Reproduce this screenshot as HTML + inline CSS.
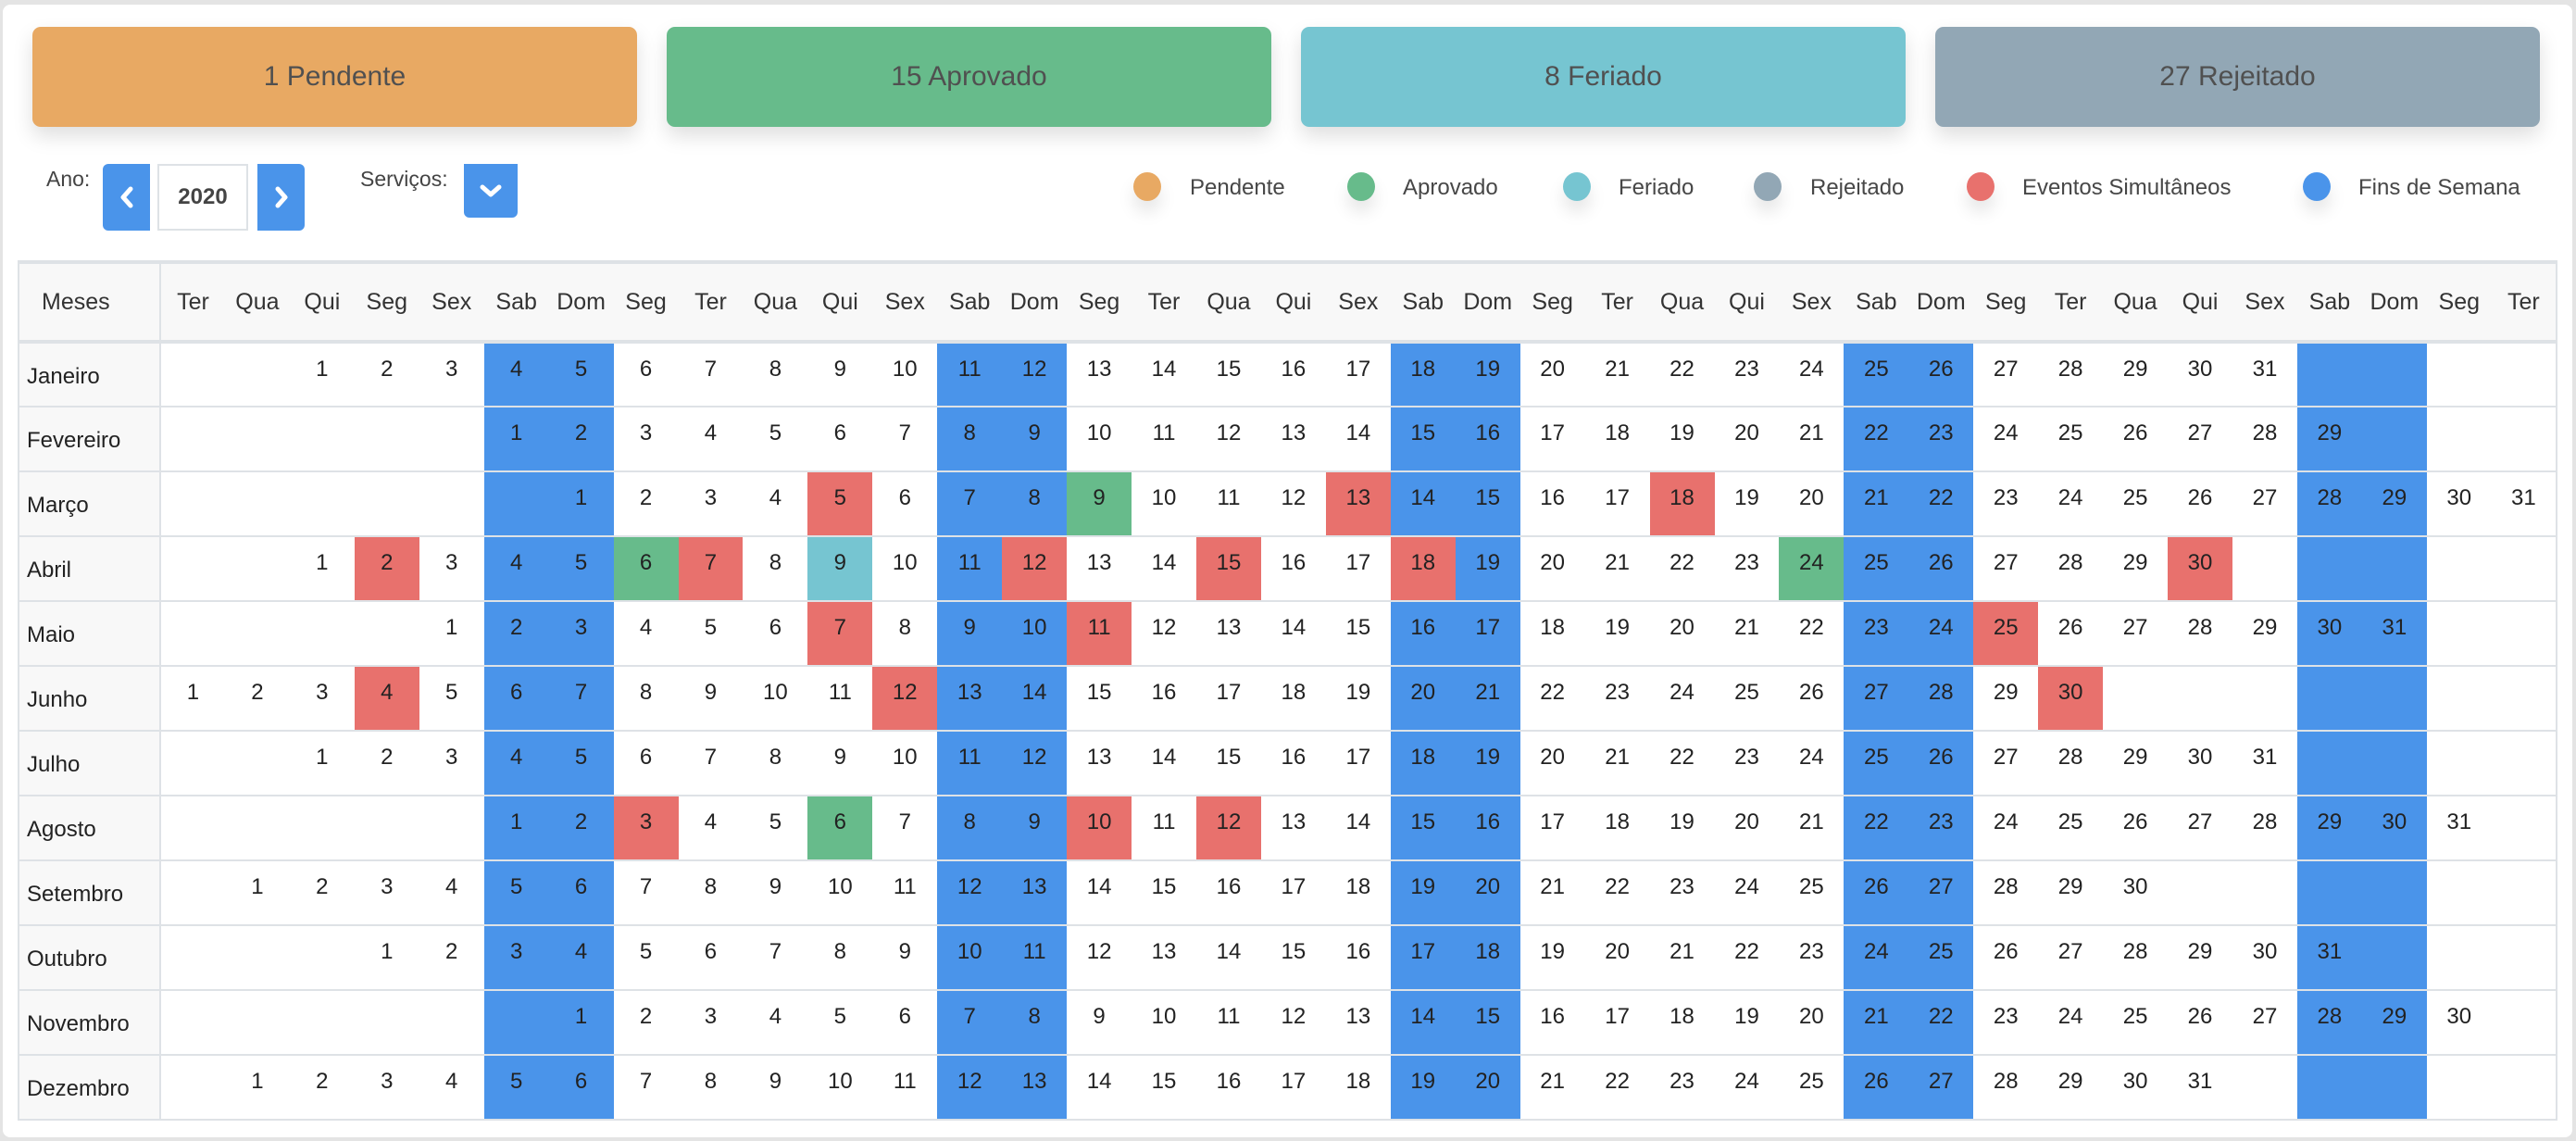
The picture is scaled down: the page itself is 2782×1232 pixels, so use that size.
<!DOCTYPE html>
<html><head><meta charset="utf-8"><style>
*{box-sizing:border-box;margin:0;padding:0}
body{width:2782px;height:1232px;background:#e4e4e4;font-family:"Liberation Sans",sans-serif;position:relative;overflow:hidden}
.card{position:absolute;left:3px;top:5px;width:2775px;height:1223px;background:#fff;border-radius:8px}
.b{position:absolute;top:29px;width:653px;height:108px;border-radius:9px;color:#505050;font-size:30px;display:flex;align-items:center;justify-content:center;box-shadow:0 10px 22px rgba(0,0,0,.13)}
.lbl{position:absolute;font-size:23px;color:#444}
.blue{background:#4a94ea}
.btn{position:absolute;top:177px;height:72px;width:51px;display:flex;align-items:center;justify-content:center}
.dot{position:absolute;top:186px;width:30px;height:31px;border-radius:50%;box-shadow:0 12px 18px rgba(0,0,0,.1)}
.lt{position:absolute;top:189px;font-size:24px;color:#474747}
table{position:absolute;left:19px;top:281px;width:2743px;border-collapse:collapse;table-layout:fixed;border-top:4px solid #dee2e6;border-left:2px solid #dee2e6;border-right:2px solid #dee2e6;border-bottom:2px solid #dee2e6}
th{height:86px;background:#f8f8f8;font-weight:normal;font-size:25px;color:#333;border-bottom:4px solid #dee2e6;text-align:center}
td{height:70px;border-top:2px solid #dee2e6;font-size:24px;color:#222;text-align:center;vertical-align:top;padding-top:14px}
th:first-child{text-align:left;padding-left:24px;border-right:2px solid #dee2e6;width:153px}
td:first-child{text-align:left;padding-left:8px;padding-top:22px;background:#f8f8f8;border-right:2px solid #dee2e6;color:#222}
tbody td:nth-child(7),tbody td:nth-child(8),tbody td:nth-child(14),tbody td:nth-child(15),tbody td:nth-child(21),tbody td:nth-child(22),tbody td:nth-child(28),tbody td:nth-child(29),tbody td:nth-child(35),tbody td:nth-child(36){background:#4a94ea}
tbody td.r{background:#e8716d}tbody td.g{background:#67bb8b}tbody td.t{background:#76c5d1}
</style></head><body>
<div class="card"></div>
<div class="b" style="left:35px;background:#e8a963">1 Pendente</div>
<div class="b" style="left:720px;background:#67bb8b">15 Aprovado</div>
<div class="b" style="left:1405px;background:#76c5d1">8 Feriado</div>
<div class="b" style="left:2090px;background:#92a7b5">27 Rejeitado</div>

<div class="lbl" style="left:50px;top:180px">Ano:</div>
<div class="btn blue" style="left:111px;border-radius:6px 0 0 6px"><svg width="20" height="26" viewBox="0 0 20 26"><path d="M14 4 L6 13 L14 22" stroke="#fff" stroke-width="5" fill="none" stroke-linecap="round" stroke-linejoin="round"/></svg></div>
<div style="position:absolute;left:170px;top:177px;width:98px;height:72px;border:2px solid #dee2e6;display:flex;align-items:center;justify-content:center;font-weight:bold;font-size:24px;color:#444">2020</div>
<div class="btn blue" style="left:278px;border-radius:0 6px 6px 0"><svg width="20" height="26" viewBox="0 0 20 26"><path d="M6 4 L14 13 L6 22" stroke="#fff" stroke-width="5" fill="none" stroke-linecap="round" stroke-linejoin="round"/></svg></div>
<div class="lbl" style="left:389px;top:180px">Serviços:</div>
<div class="btn blue" style="left:501px;width:58px;height:58px;border-radius:0 0 6px 6px"><svg width="26" height="20" viewBox="0 0 26 20"><path d="M4 6 L13 14 L22 6" stroke="#fff" stroke-width="5" fill="none" stroke-linecap="round" stroke-linejoin="round"/></svg></div>

<div class="dot" style="left:1224px;background:#e8a963"></div><div class="lt" style="left:1285px">Pendente</div>
<div class="dot" style="left:1455px;background:#67bb8b"></div><div class="lt" style="left:1515px">Aprovado</div>
<div class="dot" style="left:1688px;background:#76c5d1"></div><div class="lt" style="left:1748px">Feriado</div>
<div class="dot" style="left:1894px;background:#92a7b5"></div><div class="lt" style="left:1955px">Rejeitado</div>
<div class="dot" style="left:2124px;background:#e8716d"></div><div class="lt" style="left:2184px">Eventos Simultâneos</div>
<div class="dot" style="left:2487px;background:#4a94ea"></div><div class="lt" style="left:2547px">Fins de Semana</div>

<table>
<thead><tr><th>Meses</th><th>Ter</th><th>Qua</th><th>Qui</th><th>Seg</th><th>Sex</th><th>Sab</th><th>Dom</th><th>Seg</th><th>Ter</th><th>Qua</th><th>Qui</th><th>Sex</th><th>Sab</th><th>Dom</th><th>Seg</th><th>Ter</th><th>Qua</th><th>Qui</th><th>Sex</th><th>Sab</th><th>Dom</th><th>Seg</th><th>Ter</th><th>Qua</th><th>Qui</th><th>Sex</th><th>Sab</th><th>Dom</th><th>Seg</th><th>Ter</th><th>Qua</th><th>Qui</th><th>Sex</th><th>Sab</th><th>Dom</th><th>Seg</th><th>Ter</th></tr></thead>
<tbody>
<tr><td>Janeiro</td><td></td><td></td><td>1</td><td>2</td><td>3</td><td>4</td><td>5</td><td>6</td><td>7</td><td>8</td><td>9</td><td>10</td><td>11</td><td>12</td><td>13</td><td>14</td><td>15</td><td>16</td><td>17</td><td>18</td><td>19</td><td>20</td><td>21</td><td>22</td><td>23</td><td>24</td><td>25</td><td>26</td><td>27</td><td>28</td><td>29</td><td>30</td><td>31</td><td></td><td></td><td></td><td></td></tr>
<tr><td>Fevereiro</td><td></td><td></td><td></td><td></td><td></td><td>1</td><td>2</td><td>3</td><td>4</td><td>5</td><td>6</td><td>7</td><td>8</td><td>9</td><td>10</td><td>11</td><td>12</td><td>13</td><td>14</td><td>15</td><td>16</td><td>17</td><td>18</td><td>19</td><td>20</td><td>21</td><td>22</td><td>23</td><td>24</td><td>25</td><td>26</td><td>27</td><td>28</td><td>29</td><td></td><td></td><td></td></tr>
<tr><td>Março</td><td></td><td></td><td></td><td></td><td></td><td></td><td>1</td><td>2</td><td>3</td><td>4</td><td class="r">5</td><td>6</td><td>7</td><td>8</td><td class="g">9</td><td>10</td><td>11</td><td>12</td><td class="r">13</td><td>14</td><td>15</td><td>16</td><td>17</td><td class="r">18</td><td>19</td><td>20</td><td>21</td><td>22</td><td>23</td><td>24</td><td>25</td><td>26</td><td>27</td><td>28</td><td>29</td><td>30</td><td>31</td></tr>
<tr><td>Abril</td><td></td><td></td><td>1</td><td class="r">2</td><td>3</td><td>4</td><td>5</td><td class="g">6</td><td class="r">7</td><td>8</td><td class="t">9</td><td>10</td><td>11</td><td class="r">12</td><td>13</td><td>14</td><td class="r">15</td><td>16</td><td>17</td><td class="r">18</td><td>19</td><td>20</td><td>21</td><td>22</td><td>23</td><td class="g">24</td><td>25</td><td>26</td><td>27</td><td>28</td><td>29</td><td class="r">30</td><td></td><td></td><td></td><td></td><td></td></tr>
<tr><td>Maio</td><td></td><td></td><td></td><td></td><td>1</td><td>2</td><td>3</td><td>4</td><td>5</td><td>6</td><td class="r">7</td><td>8</td><td>9</td><td>10</td><td class="r">11</td><td>12</td><td>13</td><td>14</td><td>15</td><td>16</td><td>17</td><td>18</td><td>19</td><td>20</td><td>21</td><td>22</td><td>23</td><td>24</td><td class="r">25</td><td>26</td><td>27</td><td>28</td><td>29</td><td>30</td><td>31</td><td></td><td></td></tr>
<tr><td>Junho</td><td>1</td><td>2</td><td>3</td><td class="r">4</td><td>5</td><td>6</td><td>7</td><td>8</td><td>9</td><td>10</td><td>11</td><td class="r">12</td><td>13</td><td>14</td><td>15</td><td>16</td><td>17</td><td>18</td><td>19</td><td>20</td><td>21</td><td>22</td><td>23</td><td>24</td><td>25</td><td>26</td><td>27</td><td>28</td><td>29</td><td class="r">30</td><td></td><td></td><td></td><td></td><td></td><td></td><td></td></tr>
<tr><td>Julho</td><td></td><td></td><td>1</td><td>2</td><td>3</td><td>4</td><td>5</td><td>6</td><td>7</td><td>8</td><td>9</td><td>10</td><td>11</td><td>12</td><td>13</td><td>14</td><td>15</td><td>16</td><td>17</td><td>18</td><td>19</td><td>20</td><td>21</td><td>22</td><td>23</td><td>24</td><td>25</td><td>26</td><td>27</td><td>28</td><td>29</td><td>30</td><td>31</td><td></td><td></td><td></td><td></td></tr>
<tr><td>Agosto</td><td></td><td></td><td></td><td></td><td></td><td>1</td><td>2</td><td class="r">3</td><td>4</td><td>5</td><td class="g">6</td><td>7</td><td>8</td><td>9</td><td class="r">10</td><td>11</td><td class="r">12</td><td>13</td><td>14</td><td>15</td><td>16</td><td>17</td><td>18</td><td>19</td><td>20</td><td>21</td><td>22</td><td>23</td><td>24</td><td>25</td><td>26</td><td>27</td><td>28</td><td>29</td><td>30</td><td>31</td><td></td></tr>
<tr><td>Setembro</td><td></td><td>1</td><td>2</td><td>3</td><td>4</td><td>5</td><td>6</td><td>7</td><td>8</td><td>9</td><td>10</td><td>11</td><td>12</td><td>13</td><td>14</td><td>15</td><td>16</td><td>17</td><td>18</td><td>19</td><td>20</td><td>21</td><td>22</td><td>23</td><td>24</td><td>25</td><td>26</td><td>27</td><td>28</td><td>29</td><td>30</td><td></td><td></td><td></td><td></td><td></td><td></td></tr>
<tr><td>Outubro</td><td></td><td></td><td></td><td>1</td><td>2</td><td>3</td><td>4</td><td>5</td><td>6</td><td>7</td><td>8</td><td>9</td><td>10</td><td>11</td><td>12</td><td>13</td><td>14</td><td>15</td><td>16</td><td>17</td><td>18</td><td>19</td><td>20</td><td>21</td><td>22</td><td>23</td><td>24</td><td>25</td><td>26</td><td>27</td><td>28</td><td>29</td><td>30</td><td>31</td><td></td><td></td><td></td></tr>
<tr><td>Novembro</td><td></td><td></td><td></td><td></td><td></td><td></td><td>1</td><td>2</td><td>3</td><td>4</td><td>5</td><td>6</td><td>7</td><td>8</td><td>9</td><td>10</td><td>11</td><td>12</td><td>13</td><td>14</td><td>15</td><td>16</td><td>17</td><td>18</td><td>19</td><td>20</td><td>21</td><td>22</td><td>23</td><td>24</td><td>25</td><td>26</td><td>27</td><td>28</td><td>29</td><td>30</td><td></td></tr>
<tr><td>Dezembro</td><td></td><td>1</td><td>2</td><td>3</td><td>4</td><td>5</td><td>6</td><td>7</td><td>8</td><td>9</td><td>10</td><td>11</td><td>12</td><td>13</td><td>14</td><td>15</td><td>16</td><td>17</td><td>18</td><td>19</td><td>20</td><td>21</td><td>22</td><td>23</td><td>24</td><td>25</td><td>26</td><td>27</td><td>28</td><td>29</td><td>30</td><td>31</td><td></td><td></td><td></td><td></td><td></td></tr>
</tbody></table>
</body></html>
